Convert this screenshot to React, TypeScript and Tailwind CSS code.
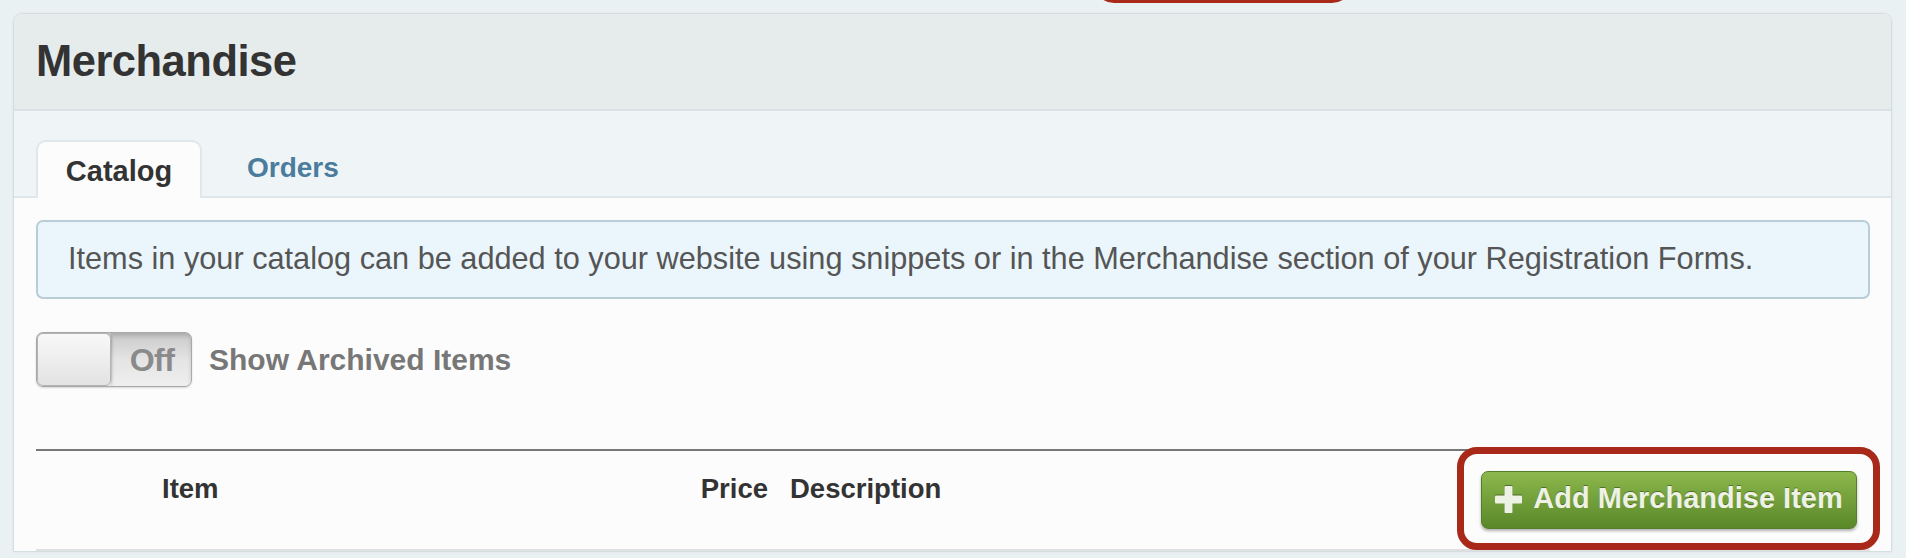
import { useState } from "react";

const font = { fontFamily: '"Liberation Sans", Arial, sans-serif' };

const PlusIcon = () => (
  <svg width="27" height="27" viewBox="0 0 27 27" className="shrink-0 drop-shadow-[0_-1px_0_rgba(0,0,0,0.35)]">
    <rect x="9.5" y="0" width="8" height="27" rx="1" fill="#eef2e4" />
    <rect x="0" y="9.5" width="27" height="8" rx="1" fill="#eef2e4" />
  </svg>
);

const ArchiveToggle = () => {
  const [on, setOn] = useState(false);
  return (
    <div className="flex items-center gap-[17px]">
      <button
        type="button"
        onClick={() => setOn(!on)}
        className="relative flex h-[55px] w-[156px] overflow-hidden rounded-[7px] border border-[#a9a9a9] bg-gradient-to-b from-[#c9c9c9] via-[#e4e4e4] to-[#efefef] shadow-[0_1px_2px_rgba(0,0,0,0.15)]"
      >
        <span className="z-10 h-full w-[74px] rounded-[6px] border border-[#b3b3b3] bg-gradient-to-b from-[#f8f8f8] to-[#e3e3e3] shadow-[1px_0_2px_rgba(0,0,0,0.15)]" />
        <span className="flex h-full flex-1 items-center justify-center pl-[2px] text-[32px] font-bold tracking-[-0.5px] text-[#8a8a8a] shadow-[inset_0_3px_4px_rgba(0,0,0,0.15)]">
          {on ? "On" : "Off"}
        </span>
      </button>
      <span className="text-[30px] font-bold text-[#777]">Show Archived Items</span>
    </div>
  );
};

export default function App() {
  const [tab, setTab] = useState<"catalog" | "orders">("catalog");

  return (
    <div
      className="relative h-[558px] w-[1906px] overflow-hidden bg-[#eaf1f3] pl-[13px] pr-[14px] pt-[13px]"
      style={font}
    >
      <div className="overflow-hidden rounded-t-[9px] border border-[#d4dee1] bg-[#fcfcfc] shadow-[0_0_3px_rgba(0,0,0,0.06)]">
        <div className="flex h-[97px] items-center border-b-2 border-[#d9e2e5] bg-[#e6ecec] pl-[22px]">
          <h1 className="text-[43.5px] font-bold tracking-[-0.5px] text-[#333]">Merchandise</h1>
        </div>

        <div className="flex h-[87px] items-end border-b-2 border-[#dde6e9] bg-[#eff5f6] pl-[22px]">
          <button
            type="button"
            onClick={() => setTab("catalog")}
            className="-mb-[2px] flex h-[58px] w-[166px] items-center justify-center rounded-t-[10px] border-2 border-b-0 border-[#dfe7ea] bg-[#fcfcfc] pt-[4px] text-[29px] font-bold text-[#333]"
          >
            Catalog
          </button>
          <button
            type="button"
            onClick={() => setTab("orders")}
            className="ml-[45px] flex h-[58px] items-center pt-[2px] text-[28px] font-bold text-[#4b7c9d]"
          >
            Orders
          </button>
        </div>

        <div className="pl-[22px] pr-[21px] pt-[22px]">
          <div className="flex h-[79px] items-center rounded-[7px] border-2 border-[#b9cdd8] bg-[#ebf6fc] pl-[30px] text-[30.7px] text-[#555]">
            Items in your catalog can be added to your website using snippets or in the Merchandise section of your Registration Forms.
          </div>

          <div className="mt-[33px]">
            <ArchiveToggle />
          </div>

          <div className="mt-[62px] flex h-[102px] border-b-2 border-t-2 border-b-[#e0e0e0] border-t-[#777]">
            <div className="w-[632px] pl-[126px] pt-[17px] text-[27.5px] font-bold text-[#333]">Item</div>
            <div className="w-[100px] pt-[17px] text-right text-[27.5px] font-bold text-[#333]">Price</div>
            <div className="flex-1 pl-[22px] pt-[17px] text-[27.5px] font-bold text-[#333]">Description</div>
            <div className="flex items-center pr-[13px]">
              <button
                type="button"
                className="flex h-[58px] w-[376px] items-center justify-center gap-[11px] rounded-[7px] border border-[#557f27] bg-gradient-to-b from-[#8db84d] to-[#5a8829] pb-[2px] text-[29px] font-bold text-[#eef2e4] shadow-[0_2px_3px_rgba(0,0,0,0.3)] [text-shadow:0_-1px_0_rgba(0,0,0,0.35)]"
              >
                <PlusIcon />
                Add Merchandise Item
              </button>
            </div>
          </div>
        </div>
      </div>

      {tab === "catalog" && (
        <>
          <div className="pointer-events-none absolute left-[1457px] top-[447px] h-[103px] w-[423px] rounded-[20px] border-[7px] border-[#a8291a]" />
          <div className="pointer-events-none absolute left-[1094px] top-[-60px] h-[63px] w-[258px] rounded-[20px] border-[7px] border-[#a8291a]" />
        </>
      )}
    </div>
  );
}
